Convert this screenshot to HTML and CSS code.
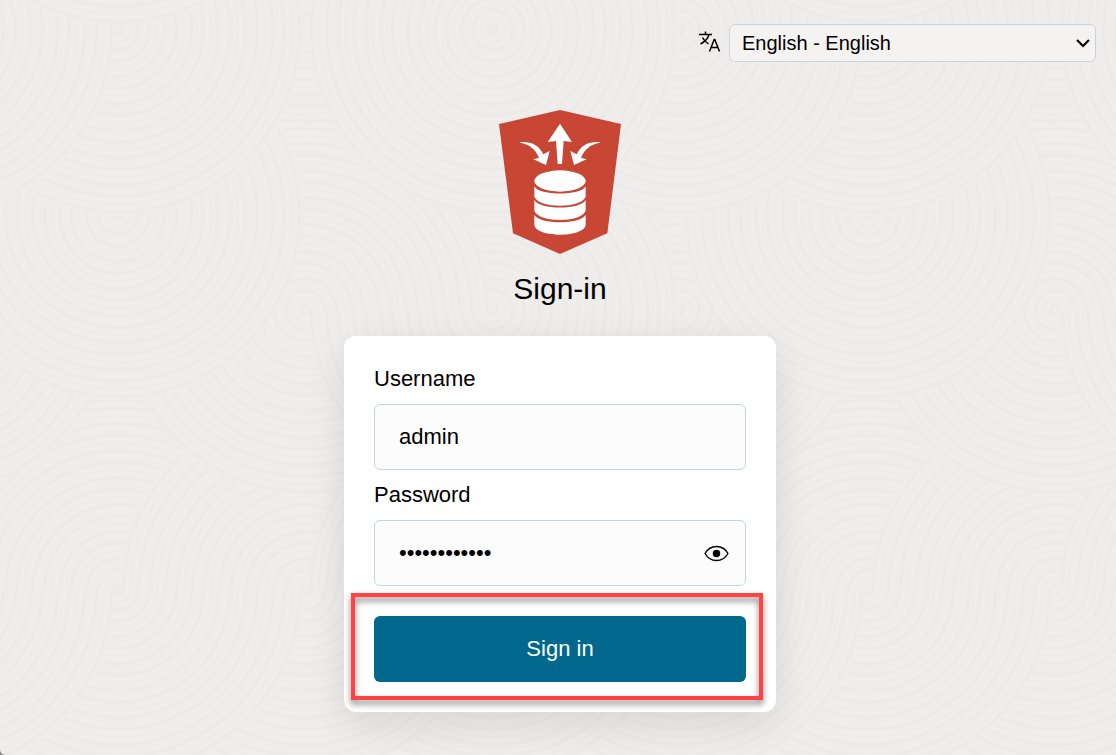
FILE: index.html
```
<!DOCTYPE html>
<html lang="en">
<head>
<meta charset="utf-8">
<meta name="viewport" content="width=device-width, initial-scale=1">
<title>Sign-in</title>
<link rel="stylesheet" href="styles.css">
</head>
<body>
<div class="page">
  <svg class="backdrop" aria-hidden="true">
    <defs>
      <radialGradient id="rings" gradientUnits="userSpaceOnUse" cx="0" cy="0" r="27" spreadMethod="repeat">
        <stop offset="0" stop-color="#f0efed"/>
        <stop offset=".16" stop-color="#ebeae8"/>
        <stop offset=".3" stop-color="#f0efed"/>
        <stop offset=".46" stop-color="#edecea"/>
        <stop offset=".58" stop-color="#f0efed"/>
        <stop offset=".72" stop-color="#ebeae8"/>
        <stop offset=".86" stop-color="#efeeec"/>
        <stop offset=".93" stop-color="#edecea"/>
        <stop offset="1" stop-color="#f0efed"/>
      </radialGradient>
      <circle id="disc" r="185" fill="url(#rings)"/>
      <path id="upper" d="M-185 0a185 185 0 0 1 370 0z" fill="url(#rings)"/>
      <path id="lower" d="M-185 0a185 185 0 0 0 370 0z" fill="url(#rings)"/>
      <g id="row-disc">
        <use href="#disc" x="-70"/><use href="#disc" x="118"/><use href="#disc" x="305"/><use href="#disc" x="493"/><use href="#disc" x="680"/><use href="#disc" x="868"/>
      </g>
      <g id="row-upper">
        <use href="#upper" x="-70"/><use href="#upper" x="118"/><use href="#upper" x="305"/><use href="#upper" x="493"/><use href="#upper" x="680"/><use href="#upper" x="868"/>
      </g>
      <g id="row-lower">
        <use href="#lower" x="868"/><use href="#lower" x="680"/><use href="#lower" x="493"/><use href="#lower" x="305"/><use href="#lower" x="118"/><use href="#lower" x="-70"/>
      </g>
      <pattern id="waves" width="750" height="940" patternUnits="userSpaceOnUse">
        <rect width="750" height="940" fill="#f0efed"/>
        <use href="#row-lower" y="780"/>
        <use href="#row-disc" y="500"/>
        <use href="#row-upper" y="590"/>
        <use href="#row-lower" y="590"/>
        <use href="#disc" x="680" y="310"/>
        <use href="#disc" x="-70" y="310"/>
        <use href="#disc" x="493" y="310"/>
        <use href="#disc" x="305" y="310"/>
        <use href="#lower" x="493" y="310"/>
        <use href="#disc" x="118" y="215"/>
        <use href="#disc" x="868" y="215"/>
        <use href="#disc" x="305" y="-60"/>
        <use href="#disc" x="868" y="30"/>
        <use href="#disc" x="118" y="30"/>
        <use href="#disc" x="680" y="30"/>
        <use href="#disc" x="-70" y="30"/>
        <use href="#disc" x="493" y="30"/>
        <use href="#disc" x="118" y="-160"/>
        <use href="#disc" x="868" y="-160"/>
      </pattern>
    </defs>
    <rect width="100%" height="100%" fill="url(#waves)"/>
  </svg>

  <header class="topbar">
    <label class="language-label" for="language" aria-label="Language">
      <svg class="language-icon" viewBox="0 2 24 24" aria-hidden="true">
        <path d="M2 5.500h13M8.500 2.500v3M12 5.500C11 9.500 7.500 13 3.500 15M5.500 8.500c1.200 2.700 3.300 4.800 6 6.300M12.500 22.500l4.700-12h.600l4.700 12M14 18.500h7"/>
      </svg>
    </label>
    <div class="language-box">
      <select class="language-select" id="language">
        <option>English - English</option>
      </select>
      <svg class="chevron" viewBox="0 0 14 10" aria-hidden="true"><path d="M1 2l6 6 6-6"/></svg>
    </div>
  </header>

  <main class="content">
    <svg class="logo" viewBox="27 30 366 432" role="img" aria-label="Database logo">
      <path fill="#c74634" d="M210 30l183 42-41 328-142 62-141-62L27 72z"/>
      <g fill="#fff">
        <path d="M210 71l36 55-25-3-5 69h-13l-5-69-25 3z"/>
        <path d="M90 126c34-2 56 8 70 37l19-10-11 42-38-17 17-5c-10-24-27-40-57-45z"/>
        <path d="M330 126c-34-2-56 8-70 37l-19-10 11 42 38-17-17-5c10-24 27-40 57-45z"/>
        <ellipse cx="210" cy="243" rx="77" ry="32"/>
        <path d="M133 259c14 29 140 29 154 0v31c-14 36-140 36-154 0z"/>
        <path d="M133 300c14 30 140 30 154 0v32c-14 37-140 37-154 0z"/>
        <path d="M133 344c14 30 140 30 154 0v30c-4 40-150 40-154 0z"/>
      </g>
    </svg>
    <h1 class="title">Sign-in</h1>

    <form class="card">
      <label class="label" for="username">Username</label>
      <input class="field" id="username" type="text" value="admin">
      <label class="label label-next" for="password">Password</label>
      <div class="password-box">
        <input class="field" id="password" type="password" value="abcdefghijkl">
        <button class="reveal" type="button" aria-label="Show password">
          <svg class="eye" viewBox="0 0 24 16" aria-hidden="true">
            <path d="M1 8C6-1 18-1 23 8 18 17 6 17 1 8z"/>
            <circle cx="12" cy="8" r="3.600"/>
          </svg>
        </button>
      </div>
      <div class="submit-box">
        <button class="submit" type="button">Sign in</button>
        <div class="highlight"></div>
      </div>
    </form>
  </main>
</div>
</body>
</html>
```
FILE: styles.css
```
* {
  box-sizing: border-box;
}

body {
  margin: 0;
  background: #8a8a8a;
  color: #000;
  font-family: "Liberation Sans", Arial, sans-serif;
  font-size: 22px;
  line-height: 26px;
}

.page {
  position: relative;
  min-height: 100vh;
  padding: 24px 20px 40px;
  overflow: hidden;
  border-bottom-left-radius: 6px;
  background: #f0efed;
}

.backdrop {
  position: absolute;
  inset: 0;
  width: 100%;
  height: 100%;
}

.topbar {
  position: relative;
  display: flex;
  justify-content: flex-end;
  align-items: center;
  gap: 8px;
}

.language-label {
  display: flex;
}

.language-icon {
  width: 24px;
  height: 24px;
  overflow: visible;
  fill: none;
  stroke: #000;
  stroke-width: 1.500;
}

.language-box {
  position: relative;
  width: 367px;
  max-width: 80%;
}

.language-select {
  display: block;
  width: 100%;
  height: 38px;
  padding: 0 32px 0 12px;
  appearance: none;
  border: 1px solid #c8d3e0;
  border-radius: 6px;
  background: #f5f3f2;
  color: #000;
  font: inherit;
  font-size: 20px;
}

.chevron {
  position: absolute;
  top: 14px;
  right: 6px;
  width: 14px;
  height: 10px;
  fill: none;
  stroke: #000;
  stroke-width: 2.200;
  pointer-events: none;
}

.content {
  position: relative;
  display: flex;
  flex-direction: column;
  align-items: center;
  margin-top: 48px;
  padding-left: 4px;
}

.logo {
  width: 122px;
  height: 144px;
}

.title {
  margin: 16px 0 28px;
  font-size: 30px;
  font-weight: 400;
  line-height: 38px;
}

.card {
  display: flex;
  flex-direction: column;
  width: 100%;
  max-width: 432px;
  padding: 30px;
  border-radius: 12px;
  background: #fff;
  box-shadow: 0 12px 40px rgba(0, 0, 0, 0.1);
}

.label {
  margin-bottom: 12px;
}

.label-next {
  margin-top: 12px;
}

.field {
  display: block;
  width: 100%;
  height: 66px;
  padding: 0 24px;
  border: 1px solid #c8d3e0;
  border-radius: 6px;
  background: #fcfcfc;
  color: #000;
  font: inherit;
}

.password-box {
  position: relative;
}

.reveal {
  position: absolute;
  top: 0;
  right: 10px;
  bottom: 0;
  display: flex;
  align-items: center;
  justify-content: center;
  width: 40px;
  padding: 0;
  border: 0;
  background: none;
}

.eye {
  width: 25px;
  height: 17px;
  fill: none;
  stroke: #000;
  stroke-width: 1.300;
}

.eye circle {
  fill: #000;
  stroke: none;
}

.submit-box {
  position: relative;
  margin-top: 30px;
}

.submit {
  display: block;
  width: 100%;
  height: 66px;
  border: 0;
  border-radius: 6px;
  background: #00688c;
  color: #fff;
  font: inherit;
}

.highlight {
  position: absolute;
  inset: -23px -17px -18px -23px;
  border: 4px solid #ff4343;
  filter: drop-shadow(0 4px 3px rgba(0, 0, 0, 0.5));
  pointer-events: none;
}
```
